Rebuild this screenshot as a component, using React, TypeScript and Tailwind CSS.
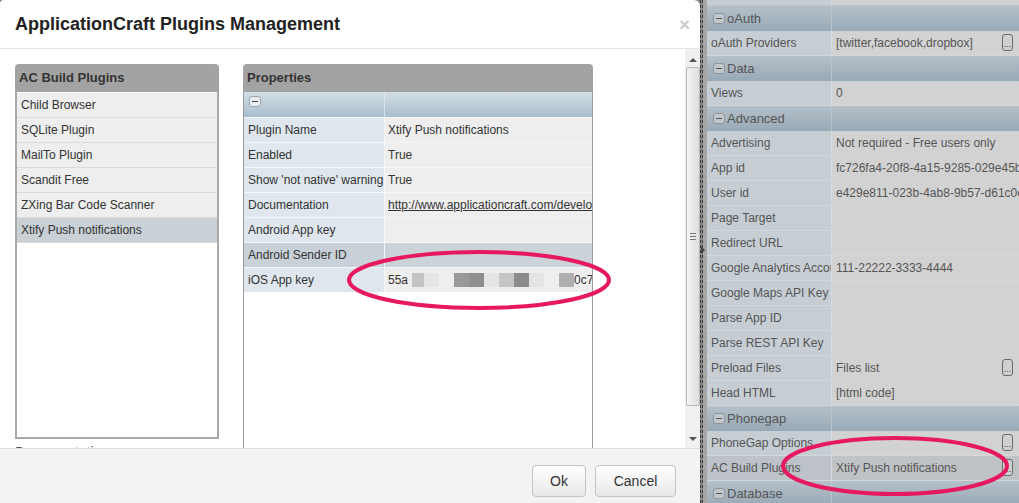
import React from "react";

type PropRow = { label: string; value?: string; link?: boolean; hl?: boolean; masked?: boolean };

const plugins = [
  "Child Browser",
  "SQLite Plugin",
  "MailTo Plugin",
  "Scandit Free",
  "ZXing Bar Code Scanner",
  "Xtify Push notifications",
];

const props: PropRow[] = [
  { label: "Plugin Name", value: "Xtify Push notifications" },
  { label: "Enabled", value: "True" },
  { label: "Show 'not native' warning", value: "True" },
  { label: "Documentation", value: "http://www.applicationcraft.com/developer-center", link: true },
  { label: "Android App key" },
  { label: "Android Sender ID", hl: true },
  { label: "iOS App key", masked: true },
];

type SideRow =
  | { group: string }
  | { label: string; value?: string; btn?: boolean; hl?: boolean };

const sideRows: SideRow[] = [
  { group: "oAuth" },
  { label: "oAuth Providers", value: "[twitter,facebook,dropbox]", btn: true },
  { group: "Data" },
  { label: "Views", value: "0" },
  { group: "Advanced" },
  { label: "Advertising", value: "Not required - Free users only" },
  { label: "App id", value: "fc726fa4-20f8-4a15-9285-029e45b1c3aa" },
  { label: "User id", value: "e429e811-023b-4ab8-9b57-d61c0e2d4f11" },
  { label: "Page Target" },
  { label: "Redirect URL" },
  { label: "Google Analytics Account", value: "111-22222-3333-4444" },
  { label: "Google Maps API Key" },
  { label: "Parse App ID" },
  { label: "Parse REST API Key" },
  { label: "Preload Files", value: "Files list", btn: true },
  { label: "Head HTML", value: "[html code]" },
  { group: "Phonegap" },
  { label: "PhoneGap Options", btn: true },
  { label: "AC Build Plugins", value: "Xtify Push notifications", btn: true, hl: true },
  { group: "Database" },
];

const maskBlocks = [
  "w-[4px] bg-[#eeeeee]",
  "w-[12px] bg-[#c4c4c4]",
  "w-[15px] bg-[#e5e5e5]",
  "w-[15px] bg-[#eeeeee]",
  "w-[15px] bg-[#999999]",
  "w-[15px] bg-[#8f8f8f]",
  "w-[15px] bg-[#e5e5e5]",
  "w-[15px] bg-[#c5c5c5]",
  "w-[15px] bg-[#8c8c8c]",
  "w-[15px] bg-[#e5e5e5]",
  "w-[15px] bg-[#eeeeee]",
  "w-[15px] bg-[#b0b0b0]",
];

const Minus = ({ dim }: { dim?: boolean }) => (
  <span
    className={`inline-flex h-[11px] w-[12px] shrink-0 items-center justify-center rounded-[3px] border ${
      dim ? "border-[#8d959c] bg-[#c2c7cb]" : "border-[#9aa5ad] bg-[#e9edf0]"
    }`}
  >
    <span className={`h-px w-[6px] ${dim ? "bg-[#555]" : "bg-[#444]"}`} />
  </span>
);

const DotsButton = () => (
  <span className="absolute right-[6px] top-[3px] flex h-[17px] w-[11px] items-end justify-center rounded-[3px] border border-[#6b6b6b] bg-[#cfcfcf] pb-[1px] text-[9px] leading-none text-[#444]">
    ...
  </span>
);

const PluginsList = () => (
  <div className="flex w-[204px] shrink-0 flex-col">
    <div className="flex h-[28px] shrink-0 items-center rounded-t-[4px] bg-[#a3a3a3] pl-[4px] text-[13px] font-bold text-[#333]">
      AC Build Plugins
    </div>
    <div className="h-[347px] shrink-0 border-2 border-t-0 border-[#a9a9a9] bg-white pt-px">
      {plugins.map((p, i) => (
        <div
          key={p}
          className={`flex h-[25px] items-center border-b border-[#dadada] pl-[4px] text-[12px] text-[#333] ${
            i === plugins.length - 1 ? "bg-[#c9d0d6]" : "bg-[#eeeeee]"
          }`}
        >
          {p}
        </div>
      ))}
    </div>
    <div className="mt-[3px] shrink-0 text-[14px] text-[#555]">Documentation</div>
  </div>
);

const PropertiesPanel = () => (
  <div className="flex w-[350px] shrink-0 flex-col">
    <div className="flex h-[28px] shrink-0 items-center rounded-t-[4px] bg-[#a3a3a3] pl-[4px] text-[13px] font-bold text-[#333]">
      Properties
    </div>
    <div className="h-[400px] shrink-0 border-x border-[#9c9c9c] bg-white">
      <div className="flex h-[25px] bg-gradient-to-b from-[#d3dee6] to-[#a8becd]">
        <div className="flex w-[140px] items-start pl-[5px] pt-[4px]">
          <Minus />
        </div>
        <div className="w-px bg-[#dce4ea]" />
        <div className="flex-1" />
      </div>
      {props.map((r) => (
        <div key={r.label} className="flex h-[25px] border-t border-[#f6f7f8] text-[12px] text-[#333]">
          <div
            className={`flex w-[140px] items-center overflow-hidden whitespace-nowrap pl-[4px] ${
              r.hl ? "bg-[#c9d1d8]" : "bg-[#dfe6ee]"
            }`}
          >
            {r.label}
          </div>
          <div className="w-px bg-[#f6f7f8]" />
          <div
            className={`flex min-w-0 flex-1 items-center overflow-hidden whitespace-nowrap pl-[3px] ${
              r.hl ? "bg-[#cbd2d8]" : "bg-[#eeeeee]"
            }`}
          >
            {r.link ? <span className="underline">{r.value}</span> : r.value}
            {r.masked && (
              <>
                <span>55a</span>
                {maskBlocks.map((c, i) => (
                  <span key={i} className={`h-[14px] shrink-0 ${c}`} />
                ))}
                <span>0c7a</span>
              </>
            )}
          </div>
        </div>
      ))}
    </div>
  </div>
);

const Scrollbar = () => (
  <div className="flex w-[15px] shrink-0 flex-col items-center bg-[#f0f0f0] pt-[4px]">
    <div className="flex h-[14px] items-center">
      <span className="h-0 w-0 border-x-[4px] border-b-[4px] border-x-transparent border-b-[#555]" />
    </div>
    <div className="relative flex h-[339px] w-[14px] items-center justify-center rounded-[2px] border border-[#b8b8b8] bg-gradient-to-r from-[#f4f4f4] to-[#dedede]">
      <div className="flex flex-col gap-[2px]">
        <span className="h-px w-[6px] bg-[#777]" />
        <span className="h-px w-[6px] bg-[#777]" />
        <span className="h-px w-[6px] bg-[#777]" />
      </div>
    </div>
    <div className="flex-1" />
    <div className="flex h-[18px] items-center">
      <span className="h-0 w-0 border-x-[4px] border-t-[4px] border-x-transparent border-t-[#555]" />
    </div>
  </div>
);

const Dialog = () => (
  <div className="flex h-[503px] w-[700px] shrink-0 flex-col overflow-hidden rounded-tl-[4px] rounded-tr-[6px] bg-white">
    <div className="flex h-[49px] shrink-0 items-center justify-between border-b border-[#e5e5e5] pl-[15px] pr-[10px]">
      <h1 className="text-[18px] font-bold text-[#222]">ApplicationCraft Plugins Management</h1>
      <span className="text-[19px] font-bold leading-none text-[#cccccc]">×</span>
    </div>
    <div className="flex h-[399px] shrink-0 overflow-hidden">
      <div className="flex min-w-0 flex-1 items-start gap-[24px] overflow-hidden pl-[15px] pt-[15px]">
        <PluginsList />
        <PropertiesPanel />
      </div>
      <Scrollbar />
    </div>
    <div className="flex flex-1 items-start justify-end gap-[9px] border-t border-[#dcdcdc] bg-[#f3f3f3] pr-[24px] pt-[16px]">
      <button className="h-[32px] w-[54px] rounded-[4px] border border-[#c4c4c4] bg-gradient-to-b from-white to-[#e8e8e8] text-[14px] text-[#333]">
        Ok
      </button>
      <button className="h-[32px] w-[81px] rounded-[4px] border border-[#c4c4c4] bg-gradient-to-b from-white to-[#e8e8e8] text-[14px] text-[#333]">
        Cancel
      </button>
    </div>
  </div>
);

const SidePanel = () => (
  <div className="flex min-w-0 flex-1 overflow-hidden">
    <div className="relative w-[3px] shrink-0 border-x border-dashed border-[#3a3a3a] bg-[#8a8a8a]">
      <span className="absolute left-0 top-[246px] h-0 w-0 border-y-[4px] border-l-[4px] border-y-transparent border-l-[#444]" />
    </div>
    <div className="w-[4px] shrink-0 bg-[#a6a6a6]" />
    <div className="flex min-w-0 flex-1 flex-col text-[12px] text-[#555]">
      <div className="flex h-[6px] shrink-0 border-b border-[#bfc4c8]">
        <div className="w-[124px] bg-[#c6cdd3]" />
        <div className="w-px bg-[#d7dadd]" />
        <div className="flex-1 bg-[#d2d2d2]" />
      </div>
      {sideRows.map((r, i) =>
        "group" in r ? (
          <div key={i} className="flex h-[25px] shrink-0 bg-gradient-to-b from-[#b5c0c9] to-[#98a9b6]">
            <div className="flex w-[124px] items-center gap-[2px] pl-[6px] text-[13px]">
              <Minus dim />
              <span>{r.group}</span>
            </div>
            <div className="w-px bg-[#b9c3ca]" />
            <div className="flex-1" />
          </div>
        ) : (
          <div key={i} className="flex h-[25px] shrink-0 border-b border-[#d5d8db]">
            <div
              className={`flex w-[124px] shrink-0 items-center overflow-hidden whitespace-nowrap pl-[4px] ${
                r.hl ? "bg-[#bcc2c8]" : "bg-[#c6cdd3]"
              }`}
            >
              {r.label}
            </div>
            <div className="w-px shrink-0 bg-[#d7dadd]" />
            <div
              className={`relative flex min-w-0 flex-1 overflow-hidden whitespace-nowrap pl-[4px] ${
                r.btn ? "items-start pt-[3px]" : "items-center"
              } ${r.hl ? "bg-[#c0c3c6]" : "bg-[#d2d2d2]"}`}
            >
              {r.value}
              {r.btn && <DotsButton />}
            </div>
          </div>
        )
      )}
    </div>
  </div>
);

export default function App() {
  return (
    <div className="relative flex h-[503px] w-[1019px] overflow-hidden bg-[#8a8a8a] font-['Liberation_Sans',Arial,sans-serif]">
      <Dialog />
      <SidePanel />
      <svg className="pointer-events-none absolute left-0 top-0" width="1019" height="503">
        <ellipse cx="479" cy="280" rx="130" ry="28" fill="none" stroke="#e6185f" strokeWidth="4" />
        <ellipse cx="895" cy="466" rx="112" ry="28" fill="none" stroke="#e6185f" strokeWidth="4" />
      </svg>
    </div>
  );
}
